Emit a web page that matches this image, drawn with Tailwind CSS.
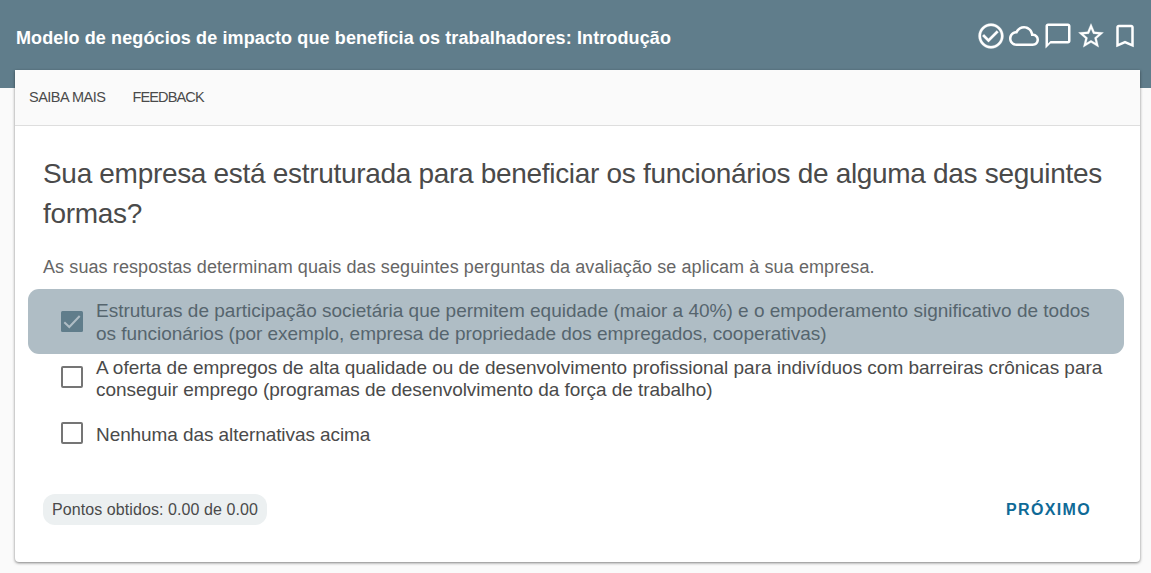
<!DOCTYPE html>
<html lang="pt-BR">
<head>
  <meta charset="UTF-8" />
  <meta name="viewport" content="width=device-width, initial-scale=1.0"/>
  <title>Modelo de negócios de impacto</title>
  <script src="https://cdn.jsdelivr.net/npm/@tailwindcss/browser@4"></script>
</head>
<body class="bg-[#fafafa] h-screen overflow-hidden font-['Liberation_Sans',Arial,sans-serif] text-[#4a4a4a] whitespace-nowrap">

  <!-- Top bar -->
  <header class="bg-[#607d8b] h-[88px] pl-4 pr-[11px] text-white flex justify-between items-start">
    <h1 class="mt-[26px] text-[18px] leading-6 font-bold tracking-[0.11px]">Modelo de negócios de impacto que beneficia os trabalhadores: Introdução</h1>
    <div class="mt-[20.5px] flex gap-[3.6px]">
      <svg class="size-[30px]" viewBox="0 0 24 24" fill="currentColor" stroke="currentColor" stroke-width="0.2"><path d="M16.59 7.58L10 14.17l-3.59-3.58L5 12l5 5 8-8zM12 2C6.48 2 2 6.48 2 12s4.48 10 10 10 10-4.48 10-10S17.52 2 12 2zm0 18c-4.42 0-8-3.58-8-8s3.58-8 8-8 8 3.58 8 8-3.58 8-8 8z"/></svg>
      <svg class="size-[30px]" viewBox="0 0 24 24" fill="currentColor"><path d="M19.35 10.04C18.67 6.59 15.64 4 12 4 9.11 4 6.6 5.64 5.35 8.04 2.34 8.36 0 10.91 0 14c0 3.31 2.69 6 6 6h13c2.76 0 5-2.24 5-5 0-2.64-2.05-4.78-4.65-4.96zM19 18H6c-2.21 0-4-1.79-4-4 0-2.05 1.53-3.76 3.56-3.97l1.07-.11.5-.95C8.08 7.14 9.94 6 12 6c2.62 0 4.88 1.86 5.39 4.43l.3 1.5 1.53.11c1.56.1 2.78 1.41 2.78 2.96 0 1.65-1.35 3-3 3z"/></svg>
      <svg class="size-[30px]" viewBox="0 0 24 24" fill="currentColor"><path d="M20 2H4c-1.1 0-2 .9-2 2v18l4-4h14c1.1 0 2-.9 2-2V4c0-1.1-.9-2-2-2zm0 14H6l-2 2V4h16v12z"/></svg>
      <svg class="size-[30px]" viewBox="0 0 24 24" fill="currentColor" stroke="currentColor" stroke-width="0.2"><path d="M22 9.24l-7.19-.62L12 2 9.19 8.63 2 9.24l5.46 4.73L5.82 21 12 17.27 18.18 21l-1.63-7.03L22 9.24zM12 15.4l-3.76 2.27 1-4.28-3.32-2.88 4.38-.38L12 6.1l1.71 4.04 4.38.38-3.32 2.88 1 4.28L12 15.4z"/></svg>
      <svg class="size-[30px]" viewBox="0 0 24 24" fill="currentColor"><path d="M17 3H7c-1.1 0-1.99.9-1.99 2L5 21l7-3 7 3V5c0-1.1-.9-2-2-2zm0 15l-5-2.18L7 18V5h10v13z"/></svg>
    </div>
  </header>

  <!-- Question card -->
  <main class="-mt-[18px] ml-[15px] w-[1125px] h-[492px] bg-white rounded-b shadow-[0_1px_3px_rgba(0,0,0,0.5)] relative">
    <nav class="h-14 bg-[#fafafa] border-b border-[#dedede] pl-[14px] pb-[2px] flex items-center gap-[27px] text-[14.5px] leading-5">
      <a class="tracking-[-0.5px]">SAIBA MAIS</a>
      <a class="tracking-[-0.85px]">FEEDBACK</a>
    </nav>

    <section class="pt-[28px] pl-[28px]">
      <h2 class="text-[28px] leading-10 tracking-[-0.31px]">Sua empresa está estruturada para beneficiar os funcionários de alguma das seguintes<br>formas?</h2>
      <p class="mt-[21px] text-[18px] leading-6 tracking-[0.095px] text-[#666]">As suas respostas determinam quais das seguintes perguntas da avaliação se aplicam à sua empresa.</p>
    </section>

    <!-- Answers -->
    <ul class="mt-[10px] ml-[13px] w-[1096px] text-[19px] leading-[23px]">
      <li class="h-[65px] rounded-[11px] bg-[#afbdc5] text-[#56656e] pl-[33px] flex items-center gap-[13px]">
        <svg class="size-[22px] shrink-0" viewBox="0 0 22 22"><rect width="22" height="21" rx="1.5" fill="#607d8b"/><path d="M3.3 11.2l5 4.8L18.7 5" fill="none" stroke="#afbdc5" stroke-width="2"/></svg>
        <p class="pt-px">Estruturas de participação societária que permitem equidade (maior a 40%) e o empoderamento significativo de todos<br><span class="tracking-[-0.03px]">os funcionários (por exemplo, empresa de propriedade dos empregados, cooperativas)</span></p>
      </li>
      <li class="h-[46px] mt-0.5 pl-[33px] flex items-center gap-[13px]">
        <span class="size-[22px] mb-1 shrink-0 border-2 border-[#757575] rounded-[2px]"></span>
        <p class="leading-[22.5px] tracking-[-0.02px]">A oferta de empregos de alta qualidade ou de desenvolvimento profissional para indivíduos com barreiras crônicas para<br><span class="tracking-[-0.05px]">conseguir emprego (programas de desenvolvimento da força de trabalho)</span></p>
      </li>
      <li class="h-[46px] mt-[9px] pl-[33px] flex items-center gap-[13px]">
        <span class="size-[22px] mb-0.5 shrink-0 border-2 border-[#757575] rounded-[2px]"></span>
        <p class="tracking-[-0.08px]">Nenhuma das alternativas acima</p>
      </li>
    </ul>

    <!-- Score and next button -->
    <footer class="mt-[37px] pl-[28px] pr-[49px] flex items-center justify-between">
      <div class="h-[31px] px-[9px] rounded-[12px] bg-[#ecf0f1] text-[16px] leading-[31px] tracking-[0.08px]">Pontos obtidos: 0.00 de 0.00</div>
      <button class="text-[16px] leading-6 font-bold tracking-[1.35px] text-[#0f6a97]">PRÓXIMO</button>
    </footer>
  </main>

</body>
</html>
